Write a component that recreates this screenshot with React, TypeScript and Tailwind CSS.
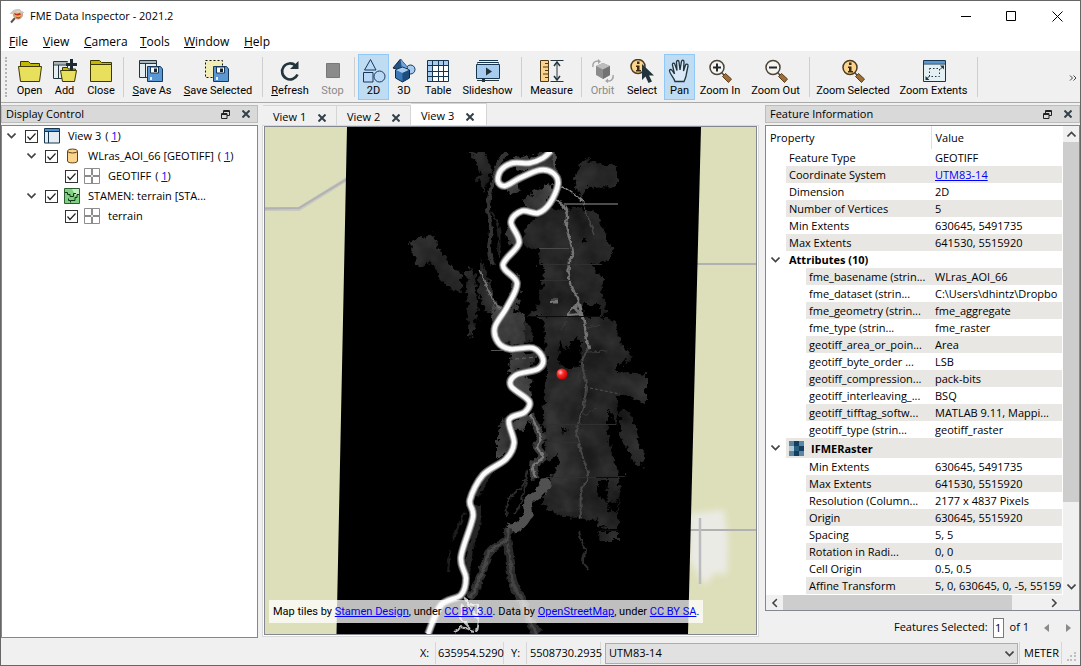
import type { ReactNode } from "react";
import clsx from "clsx";

type Point = [number, number];

/* ---------- helpers ---------- */

// Smooth curve through all points (Catmull-Rom converted to cubic beziers)
function curve(points: Point[]) {
  let d = `M${points[0][0]} ${points[0][1]}`;
  for (let i = 0; i < points.length - 1; i++) {
    const p0 = points[i - 1] ?? points[i];
    const p1 = points[i];
    const p2 = points[i + 1];
    const p3 = points[i + 2] ?? p2;
    d += `C${p1[0] + (p2[0] - p0[0]) / 6} ${p1[1] + (p2[1] - p0[1]) / 6} ${p2[0] - (p3[0] - p1[0]) / 6} ${p2[1] - (p3[1] - p1[1]) / 6} ${p2[0]} ${p2[1]}`;
  }
  return d;
}

/* ---------- toolbar icons ---------- */

function Icon({ children, wide = false }: { children: ReactNode; wide?: boolean }) {
  return (
    <svg viewBox={wide ? "0 0 28 24" : "0 0 24 24"} className={clsx("h-6", wide ? "w-7" : "w-6")} fill="none" aria-hidden="true">
      {children}
    </svg>
  );
}

const OpenIcon = () => (
  <Icon>
    <path d="M2.500 8V2.500h8l2 2h9V8" fill="#c5b800" stroke="#3b3900" />
    <path d="M.5 7.500h23l-2 15h-19z" fill="#e8e05c" stroke="#3b3900" />
  </Icon>
);

const AddIcon = () => (
  <Icon>
    <path d="M.5 2.500h14v17H.500z" fill="#e4eef2" stroke="#24343c" />
    <path d="M1 3h14v2.500H1z" fill="#a9b3b8" />
    <path d="M.5 6h14M5.500 6v13" stroke="#24343c" />
    <path d="M9.500 12V8.500h5l1 1.500h7V12" fill="#c5b800" stroke="#3b3900" />
    <path d="M7.500 11.500h16l-2 11h-12z" fill="#e8e05c" stroke="#3b3900" />
    <path d="M18.500 0v11M13 5.500h11" stroke="#1c2b33" strokeWidth="3" />
  </Icon>
);

const CloseIcon = () => (
  <Icon>
    <path d="M1.500 6V1.500h9l2 2h10V6" fill="#c5b800" stroke="#3b3900" />
    <path d="M1.500 5.500h21v17h-21z" fill="#e8e05c" stroke="#3b3900" />
  </Icon>
);

const Floppy = () => (
  <>
    <path d="M9.500 7.500h13l2 2.500v12.500h-15z" fill="#5b97d3" stroke="#17385c" />
    <path d="M12.500 8h8v6h-8z" fill="#fff" stroke="#17385c" />
    <path d="M16 9.500h3v3.500h-3z" fill="#17252e" />
    <path d="M12 18h2v3h-2z" fill="#e6f0fa" />
  </>
);

const SaveAsIcon = () => (
  <Icon wide>
    <path d="M1.500 1.500h17v17h-17z" fill="#e4eef2" stroke="#24343c" />
    <path d="M2 2h16v2H2z" fill="#a9b3b8" />
    <path d="M1.500 4.500h17M7.500 5v13" stroke="#24343c" />
    <Floppy />
  </Icon>
);

const SaveSelectedIcon = () => (
  <Icon wide>
    <path d="M1.500 1.500h17v17h-17z" fill="#f2edb4" stroke="#111" strokeDasharray="2 2" />
    <Floppy />
  </Icon>
);

const RefreshIcon = () => (
  <Icon>
    <path d="M19.500 15.500a8 8 0 1 1-2-9" stroke="#24343c" strokeWidth="2.600" />
    <path d="M20.500 2v8h-8.500z" fill="#24343c" />
  </Icon>
);

const StopIcon = () => (
  <Icon>
    <path d="M5.500 4.500h13v14h-13z" fill="#8b8b8b" stroke="#787878" />
  </Icon>
);

const TwoDIcon = () => (
  <Icon>
    <g stroke="#17385c" fill="#b9d8f5">
      <path d="M8.500.500l5.500 10.500H2.500z" />
      <path d="M1.500 13.500h9.500v9.500H1.500z" />
      <circle cx="17.500" cy="17.500" r="5.500" />
    </g>
  </Icon>
);

const ThreeDIcon = () => (
  <Icon>
    <circle cx="18.500" cy="10.500" r="4.500" fill="#a8cbee" stroke="#17385c" />
    <path d="M8.500 0L16 9l-6 3-9-3z" fill="#245486" stroke="#0d2842" />
    <path d="M8.500 0L16 9l-6 1z" fill="#6fa6dc" />
    <path d="M3.500 11l7-3 7 3v8l-7 4-7-4z" fill="#3a78b8" stroke="#0d2842" />
    <path d="M4 11l6.500-2.500L17 11l-6.500 3z" fill="#a8cbee" />
    <path d="M10.500 14l6.500-3v8l-6.500 4z" fill="#1d4d7d" />
  </Icon>
);

const TableIcon = () => (
  <Icon>
    <path d="M1.500 1.500h21v21h-21z" fill="#fff" />
    <path d="M2 2h20v5H2zM2 7h5v15H2z" fill="#a8cbf0" />
    <path d="M1.500 1.500h21v21h-21zM1.500 6.500h21M1.500 12.500h21M1.500 17.500h21M6.500 1.500v21M12.500 1.500v21M17.500 1.500v21" stroke="#17354c" />
  </Icon>
);

const SlideshowIcon = () => (
  <Icon wide>
    <path d="M5 1.500h19M3.500 4.500V3.500h21v1" stroke="#17354c" />
    <path d="M2.500 5.500h23v14h-23z" fill="#a8cbf0" stroke="#17354c" />
    <path d="M12 8.500l6 4-6 4z" fill="#24343c" />
    <path d="M3 21.500h22" stroke="#24343c" />
    <path d="M8 20h3v3H8z" fill="#24343c" />
  </Icon>
);

const MeasureIcon = () => (
  <Icon>
    <path d="M.5 1.500h8v21h-8z" fill="#fbd38b" stroke="#4d3b1c" />
    <path d="M5 4.500h3M3 8h5M5 11.500h3M3 15h5M5 18.500h3" stroke="#4d3b1c" />
    <path d="M10.500 1.500h13M10.500 22.500h13M17 3v18" stroke="#24343c" />
    <path d="M14 7l3-4 3 4M14 17l3 4 3-4" stroke="#24343c" strokeWidth="1.500" />
  </Icon>
);

const OrbitIcon = () => (
  <Icon>
    <path d="M5 7l7-3 7 3v9l-7 4-7-4z" fill="#8c8c8c" />
    <path d="M5 7l7-3 7 3-7 3.500z" fill="#bdbdbd" />
    <path d="M12 10.500L19 7v9l-7 4z" fill="#737373" />
    <path d="M2 8C1 4 4 1.500 8 2M22 16c1 4-2 6.500-6 6" stroke="#a3a3a3" strokeWidth="1.500" />
    <path d="M7 0l3 2.500L7 5zM17 19.500L14 22l3 2z" fill="#a3a3a3" />
  </Icon>
);

const InfoGlyph = () => (
  <>
    <circle cx="9" cy="8.500" r="7" fill="#fbd58e" stroke="#4d3b1c" strokeWidth="1.500" />
    <path d="M8 3.500h2.500V6H8zM7 7.500h3.500v4.500h1.500v1.500H7V12h1V9H7z" fill="#3b2c12" />
  </>
);

const SelectIcon = () => (
  <Icon>
    <g transform="translate(-1 -1)">
      <InfoGlyph />
    </g>
    <path d="M12 5v16l3.500-3.500 3 6.500 3.500-1.500-3-6h5z" fill="#24343c" />
  </Icon>
);

const PanIcon = () => (
  <Icon>
    <path
      d="M7 22.500c-1-4-5-7-5.500-10.500 0-2 2-2 3 0l2 3L4.500 6c-.5-2 2-2.500 2.500-.5l2 6L8.500 3c0-2 2.500-2 2.500 0l1 8 1.500-8.500c.5-2 2.500-1.500 2.500.5L15.500 12l2-6c.5-1.500 3-1 2.500 1l-2 10c-.5 2-1 3.500-2 5.500z"
      fill="#d9e9f7"
      stroke="#24343c"
      strokeWidth="1.300"
    />
  </Icon>
);

const Lens = ({ children }: { children: ReactNode }) => (
  <Icon>
    <path d="M13.500 13.500l3 3" stroke="#4a4a4a" strokeWidth="1.500" />
    <path d="M17.500 14.500l6 5.500-3 3.500-6-6z" fill="#9c6d36" stroke="#5f3f1b" />
    {children}
  </Icon>
);

const ZoomInIcon = () => (
  <Lens>
    <circle cx="9" cy="8.500" r="7" fill="#f4f4f0" stroke="#4a4438" strokeWidth="1.500" />
    <path d="M5 8.500h8M9 4.500v8" stroke="#24262a" strokeWidth="2" />
  </Lens>
);

const ZoomOutIcon = () => (
  <Lens>
    <circle cx="9" cy="8.500" r="7" fill="#f4f4f0" stroke="#4a4438" strokeWidth="1.500" />
    <path d="M5 8.500h8" stroke="#24262a" strokeWidth="2" />
  </Lens>
);

const ZoomSelectedIcon = () => (
  <Lens>
    <InfoGlyph />
  </Lens>
);

const ZoomExtentsIcon = () => (
  <Icon>
    <path d="M1.500 1.500h22v21h-22z" fill="#e4f0f4" stroke="#17354c" />
    <path d="M2 2h21v2.500H2z" fill="#5b97d3" />
    <path d="M1.500 5h22" stroke="#17354c" />
    <path d="M7.500 9.500h10v8h-10z" stroke="#24343c" strokeDasharray="1.500 2" />
    <path d="M18 6.500h4v4zM3.500 17v4h4z" fill="#24343c" />
    <path d="M21 7.500l-3 3M4.500 20l3-3" stroke="#24343c" />
  </Icon>
);

/* ---------- toolbar ---------- */

interface ToolProps {
  label: ReactNode;
  icon: ReactNode;
  width: string;
  active?: boolean;
  disabled?: boolean;
}

function Tool({ label, icon, width, active, disabled }: ToolProps) {
  return (
    <button
      type="button"
      disabled={disabled}
      className={clsx(
        "flex h-[46px] shrink-0 flex-col items-center border pt-1 whitespace-nowrap",
        width,
        active ? "border-[#90c8f6] bg-[#c0dcf3]" : "border-transparent",
        disabled && "text-[#8a8a8a]",
      )}
    >
      {icon}
      <span className="leading-4">{label}</span>
    </button>
  );
}

const Divider = () => <div className="mx-[3px] mt-[3px] h-10 w-px shrink-0 bg-[#cfcfcf]" />;

function Toolbar() {
  return (
    <div className="flex h-[51px] shrink-0 items-start overflow-hidden border-b border-[#a9a9a9] bg-[#f0f0f0] pt-[2px] font-[Roboto,sans-serif]">
      <div className="mt-[3px] mr-[5px] ml-1 h-10 w-px shrink-0 border-l-2 border-dotted border-[#b4b4b4]" />
      <Tool width="w-[35px]" label="Open" icon={<OpenIcon />} />
      <Tool width="w-[35px]" label="Add" icon={<AddIcon />} />
      <Tool width="w-[38px]" label="Close" icon={<CloseIcon />} />
      <Divider />
      <Tool width="w-[50px]" label={<><u>S</u>ave As</>} icon={<SaveAsIcon />} />
      <Tool width="w-[82px]" label={<><u>S</u>ave Selected</>} icon={<SaveSelectedIcon />} />
      <Divider />
      <Tool width="w-[48px]" label={<><u>R</u>efresh</>} icon={<RefreshIcon />} />
      <Tool width="w-[37px]" label="Stop" icon={<StopIcon />} disabled />
      <Divider />
      <Tool width="w-[31px]" label="2D" icon={<TwoDIcon />} active />
      <Tool width="w-[30px]" label="3D" icon={<ThreeDIcon />} />
      <Tool width="w-[38px]" label="Table" icon={<TableIcon />} />
      <Tool width="w-[61px]" label="Slideshow" icon={<SlideshowIcon />} />
      <Divider />
      <Tool width="w-[53px]" label="Measure" icon={<MeasureIcon />} />
      <Divider />
      <Tool width="w-[35px]" label="Orbit" icon={<OrbitIcon />} disabled />
      <Tool width="w-[44px]" label="Select" icon={<SelectIcon />} />
      <Tool width="w-[31px]" label="Pan" icon={<PanIcon />} active />
      <Tool width="w-[50px]" label="Zoom In" icon={<ZoomInIcon />} />
      <Tool width="w-[61px]" label="Zoom Out" icon={<ZoomOutIcon />} />
      <Divider />
      <Tool width="w-[80px]" label="Zoom Selected" icon={<ZoomSelectedIcon />} />
      <Tool width="w-[81px]" label="Zoom Extents" icon={<ZoomExtentsIcon />} />
      <Divider />
      <button type="button" aria-label="More tools" className="mr-[3px] ml-auto self-center text-[#444]">
        <svg viewBox="0 0 8 6" className="h-[6px] w-2" fill="none" stroke="currentColor">
          <path d="M1 .500L3.500 3 1 5.500M4.500.500L7 3 4.500 5.500" />
        </svg>
      </button>
    </div>
  );
}

/* ---------- title bar and menu ---------- */

function TitleBar() {
  return (
    <div className="flex h-[30px] shrink-0 items-center bg-white pl-2">
      <svg viewBox="0 0 16 16" className="mr-[5px] h-4 w-4" fill="none" aria-hidden="true">
        <path d="M6 10l-4 4.500" stroke="#5b5350" strokeWidth="2" />
        <circle cx="9" cy="6.500" r="4.500" fill="#f0a85a" stroke="#a89a92" />
        <path d="M.5 6c2-2 3-4 5-4.500s5-1 6 .5 3 1 4 3l-3 .5-4-1-4 1.500z" fill="#cfc6bf" />
        <path d="M5 5l3 1 3-1 1 1.500-3 1-3-.5z" fill="#c62a1e" />
        <path d="M6.500 8.500c2 1 4 1 5.500-.5l-1.500 2.500H8z" fill="#c8362a" />
        <path d="M7 3h4l-2 2z" fill="#f7e06a" />
      </svg>
      <span>FME Data Inspector - 2021.2</span>
      <div className="ml-auto flex h-full">
        <button type="button" aria-label="Minimize" className="grid w-[45px] place-items-center">
          <svg viewBox="0 0 11 11" className="h-[11px] w-[11px]" stroke="#000"><path d="M0 5.500h10" /></svg>
        </button>
        <button type="button" aria-label="Maximize" className="grid w-[45px] place-items-center">
          <svg viewBox="0 0 11 11" className="h-[11px] w-[11px]" stroke="#000" fill="none"><path d="M.5.500h9v9h-9z" /></svg>
        </button>
        <button type="button" aria-label="Close window" className="grid w-[46px] place-items-center">
          <svg viewBox="0 0 11 11" className="h-[11px] w-[11px]" stroke="#000"><path d="M.5.500l10 10M10.500.500l-10 10" /></svg>
        </button>
      </div>
    </div>
  );
}

const MENUS: [string, string][] = [
  ["File", "w-[34px]"],
  ["View", "w-[41px]"],
  ["Camera", "w-14"],
  ["Tools", "w-11"],
  ["Window", "w-[60px]"],
  ["Help", "w-10"],
];

function MenuBar() {
  return (
    <nav className="flex h-[21px] shrink-0 items-center border-b border-[#f0f0f0] bg-white pt-[2px] pl-2">
      {MENUS.map(([name, width]) => (
        <button key={name} type="button" className={clsx("text-left text-[12px]", width)}>
          <u>{name[0]}</u>
          {name.slice(1)}
        </button>
      ))}
    </nav>
  );
}

/* ---------- shared panel parts ---------- */

const CrossIcon = () => (
  <svg viewBox="0 0 8 8" className="h-2 w-2" stroke="#33414a" strokeWidth="2">
    <path d="M.5.500l7 7M7.500.500l-7 7" />
  </svg>
);

function DockTitle({ title }: { title: string }) {
  return (
    <div className="mb-[2px] flex h-[18px] shrink-0 items-center border border-[#bcbcbc] bg-[#d9d9d9] pr-[7px] pl-1">
      <h2>{title}</h2>
      <button type="button" aria-label={`Float ${title}`} className="mr-3 ml-auto">
        <svg viewBox="0 0 9 9" className="h-[9px] w-[9px]" fill="none" stroke="#222">
          <path d="M2.500 3V.500h6v5H6M2.500 1.500h6M.5 3.500H6v5H.500zM.5 4.500H6" />
        </svg>
      </button>
      <button type="button" aria-label={`Close ${title}`}>
        <CrossIcon />
      </button>
    </div>
  );
}

function Chevron({ className }: { className?: string }) {
  return (
    <svg viewBox="0 0 9 6" className={clsx("h-[6px] w-[9px]", className)} fill="none" stroke="#444" strokeWidth="1.600">
      <path d="M.5.500l4 4 4-4" />
    </svg>
  );
}

/* ---------- display control ---------- */

const ViewIcon = () => (
  <svg viewBox="0 0 16 16" className="h-4 w-4" fill="none">
    <path d="M.5.500h15v14.500H.500z" fill="#e4eef2" stroke="#17354c" />
    <path d="M1 1h14v2H1z" fill="#4a90d0" />
    <path d="M.5 3.500h15M4.500 4v11" stroke="#17354c" />
  </svg>
);

const DatasetIcon = () => (
  <svg viewBox="0 0 16 16" className="h-4 w-4" fill="#fbd58e" stroke="#5e4215">
    <path d="M3.500 3v10c0 2.500 10 2.500 10 0V3" />
    <ellipse cx="8.500" cy="3" rx="5" ry="2" />
  </svg>
);

const RasterIcon = () => (
  <svg viewBox="0 0 16 16" className="h-4 w-4" fill="#fff" stroke="#8c8c8c">
    <path d="M.5.500h15v15H.500z" />
    <path d="M0 8h16M8 0v16" strokeWidth="2" />
    <path d="M7 8h2M8 7v2" stroke="#fff" />
  </svg>
);

const TerrainIcon = () => (
  <svg viewBox="0 0 16 16" className="h-4 w-4" fill="none">
    <path d="M.5.500h15v15H.500z" fill="#7fd07f" stroke="#2c5c34" />
    <path d="M8 1h7v5l-3 2-2-3z" fill="#c3edc0" />
    <path d="M1 4.500h2.500v2H6v2h3.500v-3H12M15 6.500h-2v3h-2v3H6.500v2M6.500 12.500h-2v-2" stroke="#14361c" />
  </svg>
);

interface LayerProps {
  id: string;
  indent: string;
  icon: ReactNode;
  label: string;
  count?: number;
  leaf?: boolean;
}

function Layer({ id, indent, icon, label, count, leaf }: LayerProps) {
  return (
    <li className={clsx("flex h-5 items-center", indent)}>
      <span className="w-[18px] shrink-0">{!leaf && <Chevron />}</span>
      <span className="grid h-[13px] w-[13px] shrink-0">
        <input id={id} type="checkbox" defaultChecked className="h-[13px] w-[13px] appearance-none border border-[#333] bg-white [grid-area:1/1]" />
        <svg viewBox="0 0 13 13" className="pointer-events-none h-[13px] w-[13px] [grid-area:1/1]" fill="none" stroke="#222" strokeWidth="1.200">
          <path d="M2.500 6.500l2.500 3 5.500-6" />
        </svg>
      </span>
      <span className="mr-2 ml-[6px] shrink-0">{icon}</span>
      <label htmlFor={id} className="whitespace-nowrap">{label}</label>
      {count && (
        <span className="ml-1">
          ( <a href="#features" className="text-[#0000ff] underline">{count}</a>)
        </span>
      )}
    </li>
  );
}

function DisplayControl() {
  return (
    <section className="mb-[3px] flex w-[257px] shrink-0 flex-col">
      <DockTitle title="Display Control" />
      <ul className="flex-1 border border-[#828790] bg-white">
        <Layer id="view-3" indent="pl-[5px]" icon={<ViewIcon />} label="View 3" count={1} />
        <Layer id="wlras" indent="pl-[25px]" icon={<DatasetIcon />} label="WLras_AOI_66 [GEOTIFF]" count={1} />
        <Layer id="geotiff" indent="pl-[45px]" icon={<RasterIcon />} label="GEOTIFF" count={1} leaf />
        <Layer id="stamen" indent="pl-[25px]" icon={<TerrainIcon />} label="STAMEN: terrain [STA..." />
        <Layer id="terrain" indent="pl-[45px]" icon={<RasterIcon />} label="terrain" leaf />
      </ul>
    </section>
  );
}

/* ---------- map ---------- */

const RIVER: Point[] = [
  [551, 151], [543, 158], [530, 163], [513, 163], [501, 170], [498, 181], [505, 186], [520, 178], [540, 170],
  [553, 173], [558, 184], [550, 203], [538, 213], [522, 211], [511, 222], [519, 243], [503, 265], [517, 283],
  [507, 307], [495, 327], [498, 342], [510, 349], [533, 348], [543, 359], [538, 369], [516, 375], [511, 386],
  [529, 401], [525, 412], [509, 420], [514, 443], [506, 459], [483, 475], [470, 500], [473, 517], [461, 557],
  [466, 578], [461, 595], [441, 605], [428, 634],
];

const CREEK: Point[] = [
  [553, 199], [563, 205], [567, 216], [566, 225], [570, 240], [573, 254], [569, 262], [570, 283], [578, 299],
  [575, 308], [583, 318], [586, 335], [589, 349], [582, 362], [586, 385], [583, 408], [577, 430], [582, 455],
  [588, 475], [581, 492], [581, 518],
];

const SLOUGH: Point[] = [
  [530, 415], [535, 424], [541, 437], [537, 447], [543, 457], [533, 466], [536, 479],
];

const LOWER_SLOUGH: Point[] = [
  [547, 484], [539, 493], [528, 502], [528, 514], [519, 526], [508, 528], [506, 540], [490, 551], [484, 567], [474, 592], [468, 597],
];

// floodplain patches east of the river
const PLAIN = [
  "M523 247L525 227 547 210 567 208 597 212 603 227 613 253 604 263 590 264 604 280 601 293 607 307 603 317 617 322 619 340 633 358 617 367 617 372 646 375 646 403 618 395 618 417 613 440 626 475 619 477 618 530 600 528 597 520 567 517 547 510 543 503 550 480 545 450 543 413 547 373 544 317 528 317 533 307 540 287 545 270 539 265 539 248z",
  "M620 410L630 413 638 440 645 457 641 468 635 463 620 437z",
  "M580 163L588 160 600 165 617 165 617 187 587 188 580 200 575 180z",
  "M597 532h21v8h-18z",
];

// and the thinner ones on its west bank
const WEST_PLAIN = [
  "M410 243L432 233 440 250 452 268 462 273 461 292 450 288 438 276 433 262 418 270z",
  "M466 270l8-3 4 48-8 26-2-28z",
  "M469 152l16 1 7 17-8 22-8-14 6-5z",
  "M478 290l3-30 8 22 8 28-12 2z",
  "M504 320l20-2 10 20-14 8-18-2z",
];

// wet ground close to the channel, a tone lighter
const BANKS = [
  "M515 158l38-6 4 25-18-8-24 2z",
  "M522 200l26-16 7 4-12 22-14 2z",
  "M504 187l14-5 2 8-10 6z",
  "M510 222l11 16-1 12-8-2-7-14z",
  "M516 270l4 24-4 14-8-6 6-20z",
  "M512 352l25 2-6 14-24 6z",
  "M510 388l6-14 14 4 2 20-12 0z",
  "M510 422l22-9-10 18-8-2z",
  "M498 430l8-14 8 14 0 18-16 12z",
  "M494 305l30 3 2 38-26-4-8-16z",
];

const GAPS = [
  "M517 248h22v18l6 6-6 32-10 12-14-4 8-24z",
  "M560 340l7 10 8-14 6 8 1 22-16 3-8-8z",
  "M582 305h18v12h-17z",
  "M607 410l8 10 4 22 8 32-8 0-12-38z",
  "M521 189l25-14 3 7-26 13z",
  "M598 480h8l2 22-10-6zM610 502l7-2 0 14-8-4z",
  "M562 427l6 3-4 4zM583 238h4v4h-4z",
  "M545 464l14-8-4 18-8 6z",
];

function RasterMap() {
  return (
    <svg viewBox="265 127 491 507" preserveAspectRatio="xMidYMid slice" className="absolute inset-0 h-full w-full" role="img" aria-label="River raster over terrain">
      <defs>
        <filter id="ragged" x="-10%" y="-10%" width="120%" height="120%" colorInterpolationFilters="sRGB">
          <feTurbulence type="fractalNoise" baseFrequency="0.18" numOctaves="3" seed="4" result="noise" />
          <feDisplacementMap in="SourceGraphic" in2="noise" scale="10" xChannelSelector="R" yChannelSelector="G" result="edges" />
          <feTurbulence type="fractalNoise" baseFrequency="0.035" numOctaves="4" seed="7" />
          <feColorMatrix values="1 0 0 0 0  1 0 0 0 0  1 0 0 0 0  0 0 0 0 1" result="tone" />
          <feComposite in="edges" in2="tone" operator="arithmetic" k1="1.100" k2="0.450" />
        </filter>
        <filter id="wiggle" x="-20%" y="-10%" width="140%" height="120%" colorInterpolationFilters="sRGB">
          <feTurbulence type="fractalNoise" baseFrequency="0.2" numOctaves="2" seed="9" result="noise" />
          <feDisplacementMap in="SourceGraphic" in2="noise" scale="5" xChannelSelector="R" yChannelSelector="G" />
        </filter>
        <filter id="soft" x="-50%" y="-50%" width="200%" height="200%">
          <feGaussianBlur stdDeviation="3" />
        </filter>
        <radialGradient id="ball" cx="0.35" cy="0.35" r="0.7">
          <stop offset="0" stopColor="#ffc4c4" />
          <stop offset="0.4" stopColor="#ff2a2a" />
          <stop offset="1" stopColor="#c40000" />
        </radialGradient>
      </defs>

      {/* terrain tiles */}
      <path d="M265 127h491v507H265z" fill="#dddfba" />
      <path d="M265 209h34l48-30" fill="none" stroke="#c9c9bd" strokeWidth="4" />
      <path d="M265 208.500l34-.5 48-29" fill="none" stroke="#b1b1b3" strokeWidth="2" />
      <path d="M690 514l34-4 4 30-1 34-13-1-9 12-15-24z" fill="#ebebe6" filter="url(#soft)" />
      <path d="M690 264h66M688 530h68" stroke="#b1b1b3" strokeWidth="2" />
      <path d="M700 518v66" stroke="#bbbbbd" strokeWidth="2.500" />

      {/* raster footprint */}
      <path d="M347 127h354l-13 507H336.500z" fill="#000" />

      <g filter="url(#ragged)">
        {PLAIN.map((d) => <path key={d} d={d} fill="#252525" />)}
        {WEST_PLAIN.map((d) => <path key={d} d={d} fill="#262626" />)}
        <path d="M546 372h35v140h-34z" fill="#292929" />
        {BANKS.map((d) => <path key={d} d={d} fill="#3c3c3c" />)}
        {GAPS.map((d) => <path key={d} d={d} fill="#000" />)}
      </g>

      <g fill="none" filter="url(#wiggle)">
        <path d={curve([[507, 152], [498, 165], [492, 185], [488, 208], [491, 228], [489, 250], [493, 265]])} stroke="#343434" strokeWidth="4" />
        <path d={curve([[492, 212], [499, 230], [499, 258]])} stroke="#222" strokeWidth="2" />
        <path d={curve([[480, 270], [488, 290], [498, 308], [504, 307]])} stroke="#777" strokeWidth="1.500" />
        <path d={curve([[561, 185], [572, 193], [583, 201]])} stroke="#8a8a8a" strokeWidth="1.500" />
        <path d={curve([[583, 201], [587, 215], [594, 235]])} stroke="#484848" strokeWidth="1.500" />
        <path d="M554 152l1 20" stroke="#4a4a4a" strokeWidth="3" />
        <path d={curve([[478, 505], [477, 527], [470, 550], [467, 575]])} stroke="#252525" strokeWidth="6" />
        <path d={curve([[500, 462], [488, 477], [476, 497]])} stroke="#222" strokeWidth="4" />
        <path d={curve([[527, 470], [523, 485], [508, 500], [507, 517]])} stroke="#2c2c2c" strokeWidth="2" />
        <path d={curve([[526, 482], [521, 503], [514, 514]])} stroke="#2c2c2c" strokeWidth="2" />
        <path d={curve([[579, 531], [582, 543], [586, 550], [583, 560], [588, 570]])} stroke="#2e2e2e" strokeWidth="2" />
        <path d={curve([[507, 541], [510, 560], [513, 583], [523, 602], [532, 625], [538, 634]])} stroke="#2c2c2c" strokeWidth="9" />
        <path d={curve([[507, 541], [510, 560], [513, 583], [523, 602], [532, 625], [538, 634]])} stroke="#444" strokeWidth="3" />
        <path d={curve(CREEK.slice(0, 13))} stroke="#747474" strokeWidth="2.500" />
        <path d={curve(CREEK.slice(12))} stroke="#484848" strokeWidth="2" />
        <path d="M588 352l20-1M583 415l14-6M586 328l14-3M560 330l8-10" stroke="#3c3c3c" />
        <path d="M578 300l3 14-14 1 8-8M583 318l-3-14" stroke="#777" strokeWidth="2" />
        <path d="M551 301h7" stroke="#777" strokeWidth="3" />
        <path d={curve(SLOUGH)} stroke="#3a3a3a" strokeWidth="8" />
        <path d={curve(SLOUGH)} stroke="#777" strokeWidth="2.500" />
        <path d={curve(LOWER_SLOUGH.slice(0, 6))} stroke="#515151" strokeWidth="9" />
        <path d={curve(LOWER_SLOUGH.slice(5))} stroke="#2e2e2e" strokeWidth="8" />
        <path d={curve(LOWER_SLOUGH.slice(5))} stroke="#484848" strokeWidth="3" />
        <path d="M465 512l-6 13-7 16M450 550l-2 22" stroke="#1e1e1e" strokeWidth="2" />
        <circle cx="545" cy="484" r="6" fill="#515151" />
      </g>

      <g stroke="#505050" fill="none">
        <path d="M564 204h54" stroke="#989898" />
        <path d="M539 248.500h30" stroke="#4a4a4a" />
        <path d="M540 264.500h62M540 280.500h32M546 424.500h70M546 477.500h50M546 442.500h34" stroke="#303030" />
        <path d="M530 316.500h70M596 477.500h22M600 530.500h18" stroke="#0c0c0c" />
        <path d="M590 388l30 6" strokeDasharray="3 2" />
        <path d="M515 359l22-2" stroke="#666" strokeDasharray="4 3" />
        <path d="M491 350.500h20" stroke="#555" />
      </g>

      {/* delta at the lower end */}
      <g fill="none" stroke="#b9b9b9" strokeWidth="2" filter="url(#wiggle)">
        <path d="M464 597l6 10 8 12-2 14M454 632l8-5 12 4M470 604l8 2v12M463 604l-3 14 10 10" />
      </g>

      {/* main channel */}
      <path d={curve(RIVER)} fill="none" stroke="#5a5a5a" strokeWidth="8" />
      <path d={curve(RIVER)} fill="none" stroke="#b5b5b5" strokeWidth="6" />
      <path d={curve(RIVER)} fill="none" stroke="#fbfbfb" strokeWidth="4" />
      <path d="M460 127h120v25H460z" fill="#000" />

      <circle cx="562" cy="374" r="5.500" fill="url(#ball)" />
    </svg>
  );
}

const linkStyle = "text-[#0000ff] underline";

function Attribution() {
  return (
    <p className="absolute bottom-[11px] left-1 bg-white/75 px-1 py-[3px] font-[Roboto,sans-serif] leading-[17px] whitespace-nowrap">
      Map tiles by <a href="#stamen" className={linkStyle}>Stamen Design</a>, under{" "}
      <a href="#cc-by" className={linkStyle}>CC BY 3.0</a>. Data by{" "}
      <a href="#osm" className={linkStyle}>OpenStreetMap</a>, under{" "}
      <a href="#cc-by-sa" className={linkStyle}>CC BY SA</a>.
    </p>
  );
}

function MapView() {
  return (
    <section className="mx-1 mb-1 flex min-w-0 flex-1 flex-col">
      <div className="flex h-5 shrink-0 items-end pl-px" role="tablist">
        {["View 1", "View 2", "View 3"].map((name) => {
          const active = name === "View 3";
          return (
            <div
              key={name}
              className={clsx(
                "flex items-center border-t border-r border-[#d5d5d5] pt-1 pl-[10px]",
                active ? "h-[22px] w-[76px] bg-white" : "h-5 w-[74px]",
              )}
            >
              <button type="button" role="tab" aria-selected={active} className="mr-3">{name}</button>
              <button type="button" aria-label={`Close ${name}`}><CrossIcon /></button>
            </div>
          );
        })}
      </div>
      <div className="flex flex-1 border border-[#d9d9d9] bg-white px-px pb-px">
        <div className="relative flex-1 overflow-hidden border border-[#828790]">
          <RasterMap />
          <Attribution />
        </div>
      </div>
    </section>
  );
}

/* ---------- feature information ---------- */

interface Row {
  name: string;
  value?: string;
  kind?: "group" | "raster" | "child" | "link";
}

const ROWS: Row[] = [
  { name: "Feature Type", value: "GEOTIFF" },
  { name: "Coordinate System", value: "UTM83-14", kind: "link" },
  { name: "Dimension", value: "2D" },
  { name: "Number of Vertices", value: "5" },
  { name: "Min Extents", value: "630645, 5491735" },
  { name: "Max Extents", value: "641530, 5515920" },
  { name: "Attributes (10)", kind: "group" },
  { name: "fme_basename (strin...", value: "WLras_AOI_66", kind: "child" },
  { name: "fme_dataset (strin...", value: "C:\\Users\\dhintz\\Dropbo", kind: "child" },
  { name: "fme_geometry (strin...", value: "fme_aggregate", kind: "child" },
  { name: "fme_type (strin...", value: "fme_raster", kind: "child" },
  { name: "geotiff_area_or_poin...", value: "Area", kind: "child" },
  { name: "geotiff_byte_order ...", value: "LSB", kind: "child" },
  { name: "geotiff_compression...", value: "pack-bits", kind: "child" },
  { name: "geotiff_interleaving_...", value: "BSQ", kind: "child" },
  { name: "geotiff_tifftag_softw...", value: "MATLAB 9.11, Mappi...", kind: "child" },
  { name: "geotiff_type (strin...", value: "geotiff_raster", kind: "child" },
  { name: "IFMERaster", kind: "raster" },
  { name: "Min Extents", value: "630645, 5491735", kind: "child" },
  { name: "Max Extents", value: "641530, 5515920", kind: "child" },
  { name: "Resolution (Column...", value: "2177 x 4837 Pixels", kind: "child" },
  { name: "Origin", value: "630645, 5515920", kind: "child" },
  { name: "Spacing", value: "5, 5", kind: "child" },
  { name: "Rotation in Radi...", value: "0, 0", kind: "child" },
  { name: "Cell Origin", value: "0.5, 0.5", kind: "child" },
  { name: "Affine Transform", value: "5, 0, 630645, 0, -5, 55159", kind: "child" },
];

const RasterBadge = () => (
  <svg viewBox="0 0 15 15" className="h-[15px] w-[15px]">
    <path d="M0 0h15v15H0z" fill="#5d87a0" />
    <path d="M5 0h5v5H5zM10 5h5v5h-5zM5 10h5v5H5z" fill="#123f5f" />
    <path d="M0 5h5v5H0z" fill="#b4cbd6" />
    <path d="M5 5h5v5H5z" fill="#2b5f80" />
  </svg>
);

function PropertyRow({ row, striped }: { row: Row; striped: boolean }) {
  const header = row.kind === "group" || row.kind === "raster";
  const shade = striped && "bg-[#e9e7e3]";
  return (
    <tr className={row.kind === "raster" ? "h-5" : "h-[17px]"}>
      <td className="p-0">
        <div className="flex h-full items-center">
          <span className={clsx("shrink-0", row.kind === "child" ? "w-10" : "w-5")}>
            {header && <Chevron className="ml-[5px]" />}
          </span>
          <span
            className={clsx(
              "flex flex-1 items-center overflow-hidden whitespace-nowrap",
              row.kind === "raster" ? "h-5 gap-[7px] pl-[3px]" : "h-[17px] pl-[3px]",
              header && "font-bold",
              shade,
            )}
          >
            {row.kind === "raster" && <RasterBadge />}
            {row.name}
          </span>
        </div>
      </td>
      <td className={clsx("overflow-hidden p-0 pl-1 whitespace-nowrap", shade)}>
        {row.kind === "link" ? <a href="#utm" className={linkStyle}>{row.value}</a> : row.value}
      </td>
    </tr>
  );
}

function FeatureInformation() {
  return (
    <section className="ml-[2px] flex w-[315px] shrink-0 flex-col">
      <DockTitle title="Feature Information" />
      <div className="flex h-[486px] flex-col border border-[#828790] bg-white">
        <div className="flex min-h-0 flex-1">
          <div className="min-w-0 flex-1 overflow-hidden pr-px">
            <table className="w-full table-fixed border-collapse leading-[17px]">
              <thead>
                <tr className="h-[23px]">
                  <th className="w-[165px] border-r border-[#e0e0e0] p-0 pl-1 text-left font-normal">Property</th>
                  <th className="p-0 pl-1 text-left font-normal">Value</th>
                </tr>
              </thead>
              <tbody>
                {ROWS.map((row, i) => <PropertyRow key={i} row={row} striped={i % 2 === 1} />)}
              </tbody>
            </table>
          </div>
          <div className="flex w-4 shrink-0 flex-col items-center bg-[#f0f0f0]">
            <span className="grid h-4 place-items-center"><Chevron className="rotate-180" /></span>
            <div className="h-[360px] w-full bg-[#cdcdcd]" />
            <span className="mt-auto grid h-4 place-items-center"><Chevron /></span>
          </div>
        </div>
        <div className="flex h-[15px] shrink-0 items-center bg-[#f0f0f0] pr-4">
          <span className="grid w-[17px] place-items-center"><Chevron className="rotate-90" /></span>
          <div className="h-full w-[229px] bg-[#cdcdcd]" />
          <span className="ml-auto grid w-[17px] place-items-center"><Chevron className="-rotate-90" /></span>
        </div>
      </div>
      <div className="flex flex-1 items-center justify-end pt-[3px] pr-[9px]">
        <label htmlFor="feature-index">Features Selected:</label>
        <input id="feature-index" type="text" defaultValue="1" className="mr-[6px] ml-[5px] h-5 w-[11px] border border-[#7a7a7a] bg-white text-center" />
        <span>of 1</span>
        <button type="button" aria-label="Previous feature" className="ml-[15px]">
          <svg viewBox="0 0 5 8" className="h-2 w-[5px]" fill="#8a8a8a"><path d="M5 0v8L0 4z" /></svg>
        </button>
        <button type="button" aria-label="Next feature" className="ml-[17px]">
          <svg viewBox="0 0 5 8" className="h-2 w-[5px]" fill="#8a8a8a"><path d="M0 0v8l5-4z" /></svg>
        </button>
      </div>
    </section>
  );
}

/* ---------- status bar ---------- */

function StatusBar() {
  return (
    <footer className="flex h-6 shrink-0 items-center justify-end">
      <span className="w-[15px]">X:</span>
      <span className="flex h-[22px] w-[69px] items-center border-x border-[#d7d7d7] pl-[2px]">635954.5290</span>
      <span className="w-[22px] pl-[7px]">Y:</span>
      <span className="flex h-[22px] w-[75px] items-center border-x border-[#d7d7d7] pl-[3px]">5508730.2935</span>
      <div className="relative ml-1 w-[413px]">
        <select aria-label="Coordinate system" className="h-[21px] w-full appearance-none border border-[#adadad] bg-[#e1e1e1] pl-[3px]">
          <option>UTM83-14</option>
        </select>
        <Chevron className="pointer-events-none absolute top-2 right-1" />
      </div>
      <span className="ml-px flex h-[22px] w-[43px] items-center border-x border-[#d7d7d7] pl-1">METER</span>
      <svg viewBox="0 0 9 9" className="mt-auto mr-1 mb-1 ml-[5px] h-[9px] w-[9px]" fill="#bfbfbf">
        <path d="M7 0h2v2H7zM7 3h2v2H7zM7 7h2v2H7zM3 3h2v2H3zM3 7h2v2H3zM0 7h2v2H0z" />
      </svg>
    </footer>
  );
}

export default function App() {
  return (
    <div className="flex h-screen min-h-[640px] flex-col border border-[#666] bg-[#f0f0f0] font-['Open_Sans','Noto_Sans',sans-serif] text-[11px] text-black">
      <TitleBar />
      <MenuBar />
      <Toolbar />
      <main className="flex min-h-0 flex-1 pt-[2px]">
        <DisplayControl />
        <MapView />
        <FeatureInformation />
      </main>
      <StatusBar />
    </div>
  );
}
